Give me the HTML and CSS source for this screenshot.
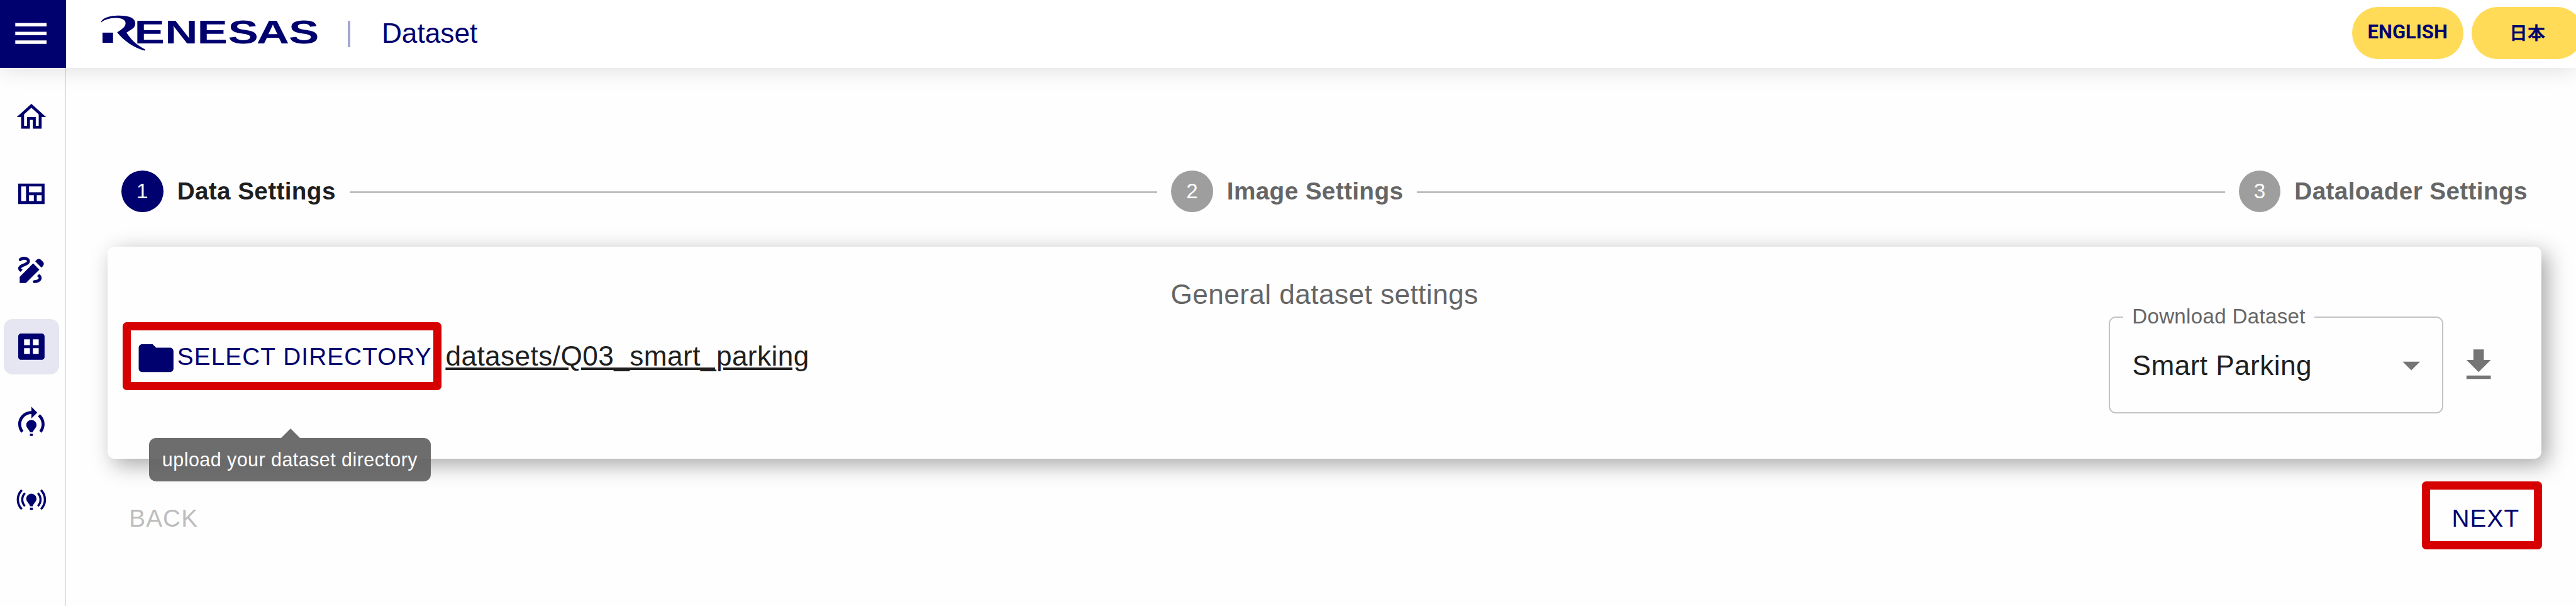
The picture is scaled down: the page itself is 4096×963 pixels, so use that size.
FILE: index.html
```html
<!DOCTYPE html>
<html lang="en">
<head>
<meta charset="utf-8">
<title>Dataset</title>
<link rel="stylesheet" href="styles.css">
</head>
<body>
<header class="topbar">
  <button class="menu-btn" aria-label="Menu"><svg class="icon-lg" viewBox="0 0 24 24"><path d="M3 18h18v-2H3v2zm0-5h18v-2H3v2zm0-7v2h18V6H3z"/></svg></button>
  <svg class="logo" viewBox="0 0 1170 240" role="img" aria-label="Renesas">
    <path d="M22 70C24 50 62 35 112 35C168 35 197 48 197 76C197 100 172 108 152 122C175 160 210 190 248 208L245 214C190 200 140 165 104 121C125 105 147 95 147 74C147 55 125 47 95 47C65 48 40 55 22 70Z"/>
    <rect x="29" y="122" width="54" height="52"/>
    <text class="logo-text" transform="scale(1.4 1)" x="137 249 367 480 584 702" y="178">ENESAS</text>
  </svg>
  <span class="divider"></span>
  <h1 class="page-title">Dataset</h1>
  <div class="langs">
    <button class="lang">ENGLISH</button>
    <button class="lang lang-ja" lang="ja">日本</button>
  </div>
</header>
<div class="layout">
  <nav class="sidebar">
    <a class="nav-item"><svg class="icon" viewBox="0 0 24 24"><path d="M12 5.69l5 4.5V18h-2v-6H9v6H7v-7.81l5-4.5M12 3L2 12h3v8h6v-6h2v6h6v-8h3L12 3z"/></svg></a>
    <a class="nav-item"><svg class="icon" viewBox="0 0 24 24"><path d="M3 5v14h18V5H3zm5.33 12H5V7h3.33v10zm5.34 0h-3.33v-4h3.33v4zm5.33 0h-3.33v-4H19v4zm0-6h-8.67V7H19v4z"/></svg></a>
    <a class="nav-item"><svg class="icon" viewBox="0 0 24 24"><path d="M18.85 10.39l1.06-1.06c.78-.78.78-2.05 0-2.83L18.5 5.09c-.78-.78-2.05-.78-2.83 0l-1.06 1.06 4.24 4.24zm-5.66-2.83L4 16.76V21h4.24l9.19-9.19-4.24-4.25zM19 17.5c0 2.19-2.54 3.5-5 3.5-.55 0-1-.45-1-1s.45-1 1-1c1.54 0 3-.73 3-1.5 0-.47-.48-.87-1.23-1.2l1.48-1.48c1.07.63 1.75 1.47 1.75 2.68zM4.58 13.35C3.61 12.79 3 12.06 3 11c0-1.8 1.89-2.63 3.56-3.36C7.59 7.18 9 6.56 9 6c0-.41-.78-1-2-1-1.26 0-1.8.61-1.83.64-.35.41-.98.46-1.4.12-.41-.34-.49-.95-.15-1.38C3.73 4.24 4.76 3 7 3s4 1.32 4 3c0 1.87-1.93 2.72-3.64 3.47C6.42 9.88 5 10.5 5 11c0 .31.43.6 1.07.86l-1.49 1.49z"/></svg></a>
    <a class="nav-item nav-active"><svg class="icon" viewBox="0 0 24 24"><path class="pane" d="M6 6h12v12H6z"/><path d="M19 3H5c-1.1 0-2 .9-2 2v14c0 1.1.9 2 2 2h14c1.1 0 2-.9 2-2V5c0-1.1-.9-2-2-2zm-8 14H7v-4h4v4zm0-6H7V7h4v4zm6 6h-4v-4h4v4zm0-6h-4V7h4v4z"/></svg></a>
    <a class="nav-item"><svg class="icon" viewBox="0 0 24 24"><path d="M15.5 13.5c0 2-2.5 3.5-2.5 5h-2c0-1.5-2.5-3-2.5-5 0-1.93 1.57-3.5 3.5-3.5s3.5 1.57 3.5 3.5zm-2.5 6h-2V21h2v-1.5zm6-6.5c0 1.68-.59 3.21-1.58 4.42l1.42 1.42C20.18 17.27 21 15.23 21 13c0-2.74-1.23-5.19-3.16-6.84l-1.42 1.42C17.99 8.86 19 10.82 19 13zm-3-8l-4-4v3c-4.97 0-9 4.03-9 9 0 2.23.82 4.27 2.16 5.84l1.42-1.42C5.59 16.21 5 14.68 5 13c0-3.86 3.14-7 7-7v3l4-4z"/></svg></a>
    <a class="nav-item"><svg class="icon" viewBox="0 0 24 24"><path d="M15.5 11.5c0 2-2.5 3.5-2.5 5h-2c0-1.5-2.5-3-2.5-5C8.5 9.57 10.07 8 12 8s3.5 1.57 3.5 3.5zm-2.5 6h-2V19h2v-1.5zm9-5.5c0-2.76-1.12-5.26-2.93-7.07l-1.06 1.06C19.55 7.53 20.5 9.66 20.5 12c0 2.34-.95 4.47-2.49 6.01l1.06 1.06C20.88 17.26 22 14.76 22 12zM3.5 12c0-2.34.95-4.47 2.49-6.01L4.93 4.93C3.12 6.74 2 9.24 2 12c0 2.76 1.12 5.26 2.93 7.07l1.06-1.06C4.45 16.47 3.5 14.34 3.5 12zm14 0c0 1.52-.62 2.89-1.61 3.89l1.06 1.06C18.22 15.68 19 13.93 19 12c0-1.93-.78-3.68-2.05-4.95l-1.06 1.06c.99 1 1.61 2.37 1.61 3.89zM7.05 16.95l1.06-1.06c-1-1-1.61-2.37-1.61-3.89 0-1.52.62-2.89 1.61-3.89L7.05 7.05C5.78 8.32 5 10.07 5 12c0 1.93.78 3.68 2.05 4.95z"/></svg></a>
  </nav>
  <main class="main">
    <ol class="stepper">
      <li class="step step-active"><span class="step-num">1</span><span class="step-label">Data Settings</span></li>
      <li class="step-line"></li>
      <li class="step"><span class="step-num">2</span><span class="step-label">Image Settings</span></li>
      <li class="step-line"></li>
      <li class="step"><span class="step-num">3</span><span class="step-label">Dataloader Settings</span></li>
    </ol>
    <section class="card">
      <h2 class="card-title">General dataset settings</h2>
      <div class="card-row">
        <div class="highlight select-dir">
          <svg class="icon-lg folder" viewBox="0 0 24 24"><path d="M10 4H4c-1.1 0-1.99.9-1.99 2L2 18c0 1.1.9 2 2 2h16c1.1 0 2-.9 2-2V8c0-1.1-.9-2-2-2h-8l-2-2z"/></svg>
          <span class="btn-text">SELECT DIRECTORY</span>
          <div class="tooltip">upload your dataset directory</div>
        </div>
        <span class="dir-path">datasets/Q03_smart_parking</span>
        <div class="download">
          <div class="select">
            <label class="select-label">Download Dataset</label>
            <span class="select-value">Smart Parking</span>
            <svg class="icon-lg muted" viewBox="0 0 24 24"><path d="M7 10l5 5 5-5z"/></svg>
          </div>
          <svg class="icon-lg muted" viewBox="0 0 24 24"><path d="M19 9h-4V3H9v6H5l7 7 7-7zM5 18v2h14v-2H5z"/></svg>
        </div>
      </div>
    </section>
    <div class="actions">
      <span class="btn-text back">BACK</span>
      <div class="highlight next"><span class="btn-text">NEXT</span></div>
    </div>
  </main>
</div>
</body>
</html>
```
FILE: styles.css
```css
html { font-size: 93.09px; }
* { box-sizing: border-box; }
body {
  margin: 0;
  height: 100vh;
  overflow: hidden;
  display: flex;
  flex-direction: column;
  background: #fefefe;
  color: #1f1f1f;
  font-family: "Liberation Sans", Arial, sans-serif;
  font-size: .475rem;
}
button { border: 0; padding: 0; font: inherit; }
svg { display: block; flex: none; fill: #00006e; }

/* Top bar */
.topbar {
  position: relative;
  z-index: 2;
  flex: none;
  display: flex;
  align-items: center;
  height: 1.157rem;
  background: #fff;
  box-shadow: 0 0 .4rem rgba(0, 0, 0, .15);
}
.menu-btn {
  width: 1.127rem;
  height: 100%;
  padding: 0 0 .01rem .177rem;
  display: flex;
  align-items: center;
  background: #00006e;
}
.menu-btn svg { fill: #fff; }
.icon-lg { width: .713rem; height: .713rem; }
.logo { width: 3.9rem; height: .8rem; margin: 0 .39rem .05rem .523rem; }
.logo-text { font-size: 167px; font-weight: 700; }
.divider { width: .04rem; height: .45rem; margin-right: .54rem; background: #a6a6d3; }
.page-title {
  margin: 0;
  padding-bottom: .035rem;
  font-size: .475rem;
  font-weight: 400;
  line-height: .7rem;
  color: #00006e;
}
.langs { display: flex; gap: .147rem; margin: 0 -.12rem .032rem auto; }
.lang {
  width: 1.9rem;
  height: .885rem;
  padding-bottom: .045rem;
  border-radius: .443rem;
  background: #ffdb58;
  color: #00006e;
  font: 700 .333rem Roboto, sans-serif;
}
.lang-ja { font: 700 .305rem "Noto Sans CJK JP", sans-serif; }

.layout { flex: 1; display: flex; min-height: 0; }

/* Side navigation */
.sidebar {
  flex: none;
  width: 1.127rem;
  padding: .37rem 0 0 .06rem;
  border-right: .03rem solid #e0e0e0;
  display: flex;
  flex-direction: column;
  gap: .36rem;
}
.nav-item {
  width: .95rem;
  height: .945rem;
  flex: none;
  display: flex;
  align-items: center;
  justify-content: center;
  border-radius: .15rem;
}
.nav-active { background: #e6e6f2; }
.icon { width: .6rem; height: .6rem; }
.pane { fill: #fff; }

/* Content */
.main { flex: 1; padding: 1.75rem .594rem 0 .713rem; }
.stepper {
  display: flex;
  align-items: center;
  height: .713rem;
  margin: 0;
  padding: 0 .235rem;
  list-style: none;
}
.step { display: flex; align-items: center; gap: .238rem; color: #666; }
.step-active { color: #1f1f1f; }
.step-num {
  width: .713rem;
  height: .713rem;
  border-radius: 50%;
  background: #9e9e9e;
  color: #fff;
  font-size: .356rem;
  line-height: .7rem;
  text-align: center;
}
.step-active .step-num { background: #00006e; }
.step-label {
  padding-top: .015rem;
  font-size: .416rem;
  font-weight: 700;
  letter-spacing: .00938em;
  white-space: nowrap;
}
.step-line { flex: 1; height: .03rem; margin: .03rem .238rem 0; background: #bdbdbd; }

.card {
  height: 3.625rem;
  margin-top: .591rem;
  padding: .455rem .709rem 0 .26rem;
  border-radius: .12rem;
  background: #fefefe;
  box-shadow: .1rem .1rem .36rem rgba(0, 0, 0, .34);
}
.card-title {
  margin: 0 -.449rem .02rem 0;
  font-size: .475rem;
  font-weight: 400;
  line-height: .72rem;
  letter-spacing: .00938em;
  text-align: center;
  color: #666;
}
.card-row { display: flex; align-items: flex-start; }
.highlight {
  display: flex;
  align-items: center;
  height: 1.16rem;
  border: .14rem solid #d60000;
  border-radius: .07rem;
}
.btn-text {
  font-size: .416rem;
  letter-spacing: .02857em;
  white-space: nowrap;
  color: #00006e;
}
.select-dir {
  position: relative;
  width: 5.44rem;
  margin-top: .09rem;
  padding-left: .075rem;
}
.select-dir .btn-text { padding-top: .036rem; }
.folder { margin-top: .08rem; }
.tooltip {
  position: absolute;
  left: .31rem;
  top: 1.845rem;
  width: 4.805rem;
  height: .74rem;
  border-radius: .12rem;
  background: rgba(97, 97, 97, .92);
  color: #fff;
  font-size: .327rem;
  line-height: .74rem;
  letter-spacing: .0155em;
  text-align: center;
  white-space: nowrap;
}
.tooltip::before {
  content: "";
  position: absolute;
  left: 2.255rem;
  bottom: 100%;
  border: .165rem solid transparent;
  border-top: 0;
  border-bottom: .17rem solid rgba(97, 97, 97, .92);
}
.dir-path {
  margin: .315rem 0 0 .07rem;
  line-height: .7rem;
  letter-spacing: .00938em;
  text-decoration: underline;
}
.download { display: flex; align-items: center; gap: .254rem; margin-left: auto; }
.select {
  position: relative;
  display: flex;
  align-items: center;
  justify-content: space-between;
  width: 5.71rem;
  height: 1.65rem;
  padding: 0 .17rem 0 .38rem;
  border: .03rem solid #c4c4c4;
  border-radius: .12rem;
}
.select-label {
  position: absolute;
  left: .226rem;
  top: -.23rem;
  padding: 0 .15rem;
  background: #fefefe;
  color: #666;
  font-size: .356rem;
  line-height: .4rem;
  letter-spacing: .00938em;
  white-space: nowrap;
}
.select-value { padding-top: .015rem; line-height: .7rem; letter-spacing: .00938em; }
.muted { fill: #757575; }

.actions {
  display: flex;
  align-items: center;
  justify-content: space-between;
  margin-top: .38rem;
}
.actions .btn-text { padding-top: .11rem; }
.actions .back { padding-left: .365rem; color: #bdbdbd; }
.next { width: 2.05rem; padding-left: .37rem; margin-right: -.013rem; }
```
